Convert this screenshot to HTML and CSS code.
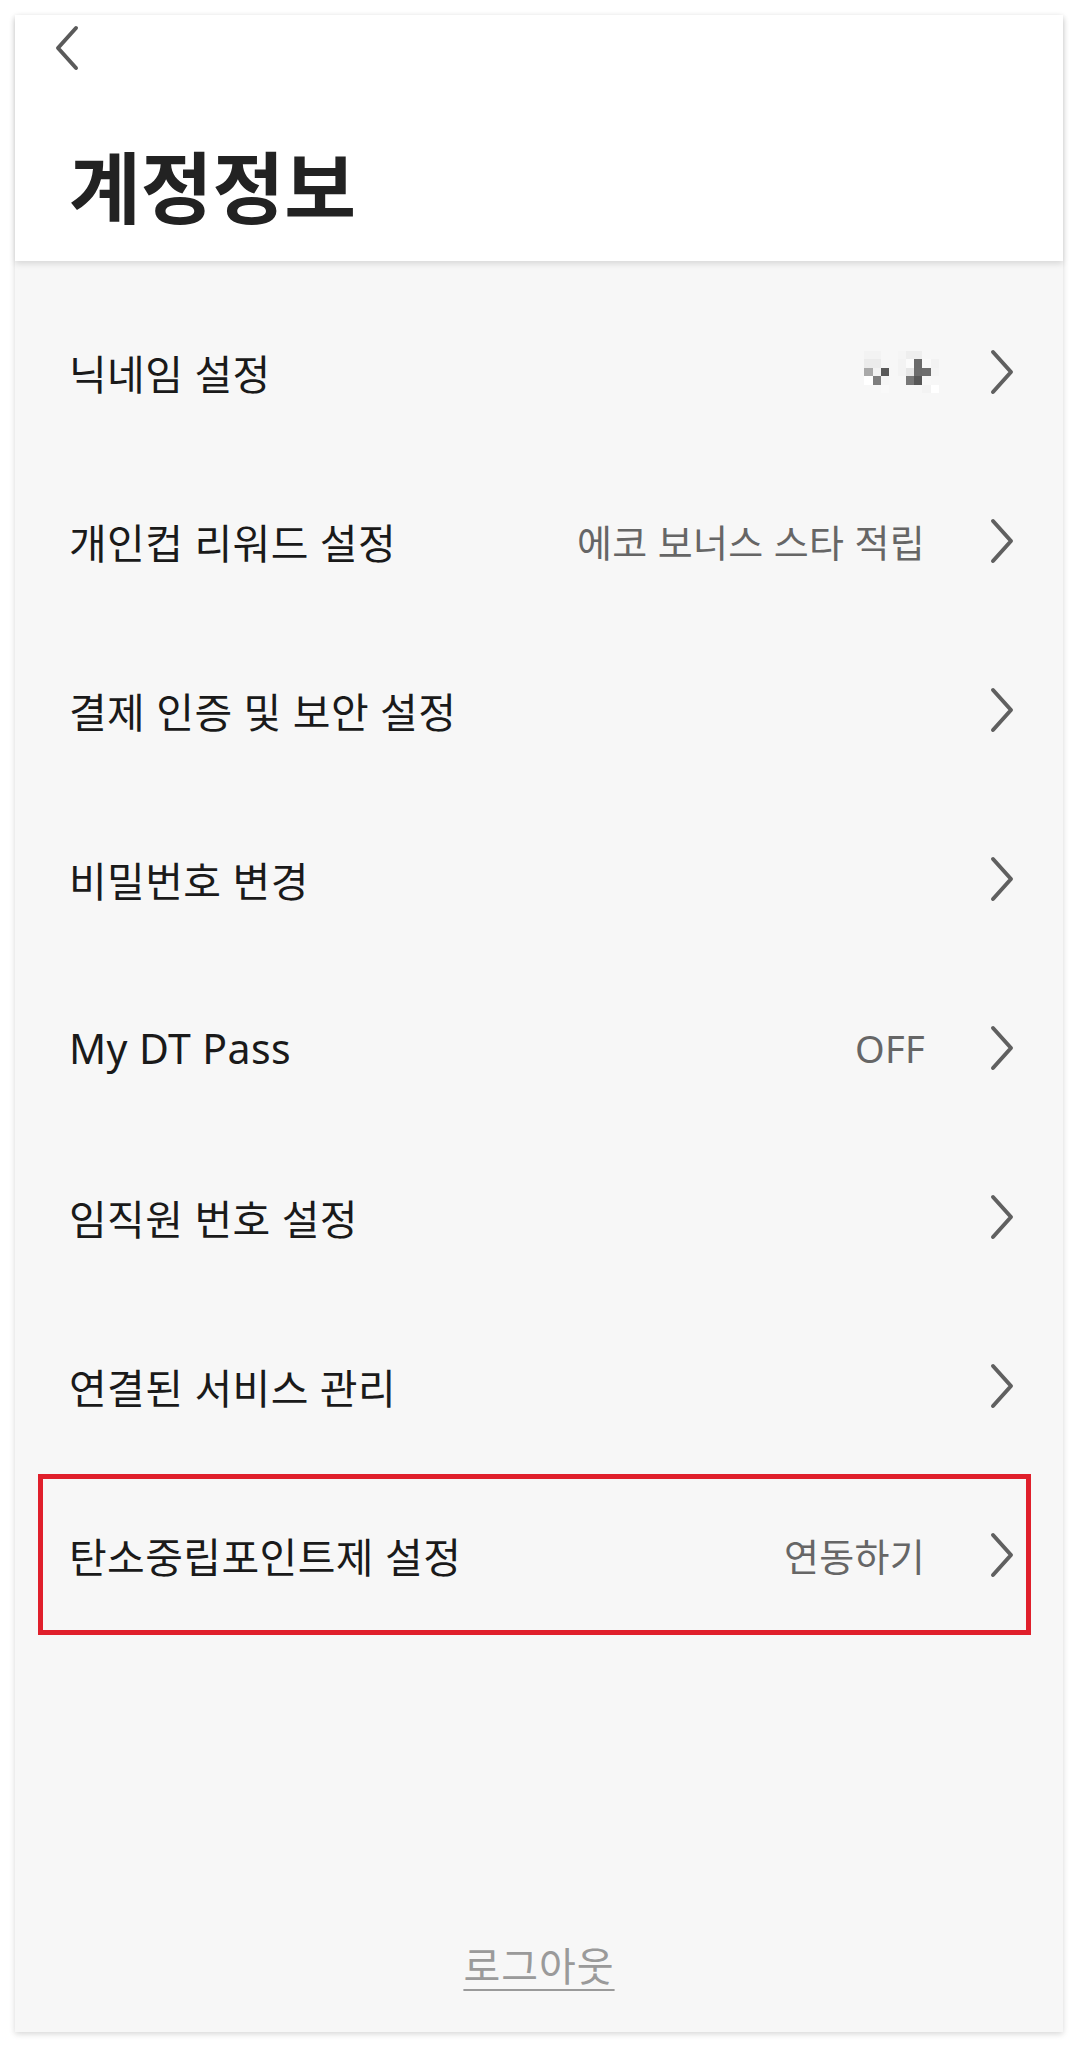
FILE: index.html
```html
<!DOCTYPE html>
<html lang="ko">

<head>
    <meta charset="UTF-8">
    <meta name="viewport" content="width=device-width, initial-scale=1.0">
    <title>계정정보</title>
    <link rel="stylesheet" href="styles.css">
</head>

<body>
    <div class="screen">
        <div class="header">
            <button class="back" aria-label="뒤로">
                <svg width="24" height="46" viewBox="0 0 24 46">
                    <polyline points="21,3 3,23 21,43" fill="none" stroke="#5a5a5a" stroke-width="4"
                        stroke-linecap="round" stroke-linejoin="round" />
                </svg>
            </button>
            <h1 class="title">계정정보</h1>
        </div>

        <div class="content">
            <ul class="menu">
                <li class="menu-item">
                    <span class="label">닉네임 설정</span>
                    <span class="value nick">
                        <svg width="83" height="42" viewBox="0 0 10 5" preserveAspectRatio="none" shape-rendering="crispEdges">
                            <rect x="1" y="0" width="2" height="1" fill="#f3f3f3" />
                            <rect x="5" y="0" width="1" height="1" fill="#f5f5f5" />
                            <rect x="6" y="0" width="2" height="1" fill="#eeeeee" />
                            <rect x="1" y="1" width="2" height="1" fill="#ebebeb" />
                            <rect x="5" y="1" width="1" height="1" fill="#f3f3f3" />
                            <rect x="6" y="1" width="1" height="1" fill="#fbfbfb" />
                            <rect x="7" y="1" width="1" height="1" fill="#6b6b6b" />
                            <rect x="8" y="1" width="1" height="1" fill="#fafafa" />
                            <rect x="9" y="1" width="1" height="1" fill="#f2f2f2" />
                            <rect x="1" y="2" width="1" height="1" fill="#a9a9a9" />
                            <rect x="2" y="2" width="1" height="1" fill="#f2f2f2" />
                            <rect x="3" y="2" width="1" height="1" fill="#595959" />
                            <rect x="5" y="2" width="1" height="1" fill="#f3f3f3" />
                            <rect x="6" y="2" width="1" height="1" fill="#e6e6e6" />
                            <rect x="7" y="2" width="1" height="1" fill="#6c6c6c" />
                            <rect x="8" y="2" width="1" height="1" fill="#6e6e6e" />
                            <rect x="9" y="2" width="1" height="1" fill="#f4f4f4" />
                            <rect x="1" y="3" width="1" height="1" fill="#ffffff" />
                            <rect x="2" y="3" width="1" height="1" fill="#7e7e7e" />
                            <rect x="3" y="3" width="1" height="1" fill="#f6f6f6" />
                            <rect x="6" y="3" width="1" height="1" fill="#777777" />
                            <rect x="7" y="3" width="1" height="1" fill="#575757" />
                            <rect x="8" y="3" width="1" height="1" fill="#f8f8f8" />
                            <rect x="3" y="4" width="1" height="1" fill="#f9f9f9" />
                            <rect x="8" y="4" width="1" height="1" fill="#f3f3f3" />
                            <rect x="9" y="4" width="1" height="1" fill="#ffffff" />
                        </svg>
                    </span>
                    <svg class="chevron" width="24" height="46" viewBox="0 0 24 46">
                        <polyline points="3,3 21,23 3,43" />
                    </svg>
                </li>
                <li class="menu-item">
                    <span class="label">개인컵 리워드 설정</span>
                    <span class="value">에코 보너스 스타 적립</span>
                    <svg class="chevron" width="24" height="46" viewBox="0 0 24 46">
                        <polyline points="3,3 21,23 3,43" />
                    </svg>
                </li>
                <li class="menu-item">
                    <span class="label">결제 인증 및 보안 설정</span>
                    <svg class="chevron" width="24" height="46" viewBox="0 0 24 46">
                        <polyline points="3,3 21,23 3,43" />
                    </svg>
                </li>
                <li class="menu-item">
                    <span class="label">비밀번호 변경</span>
                    <svg class="chevron" width="24" height="46" viewBox="0 0 24 46">
                        <polyline points="3,3 21,23 3,43" />
                    </svg>
                </li>
                <li class="menu-item">
                    <span class="label">My DT Pass</span>
                    <span class="value">OFF</span>
                    <svg class="chevron" width="24" height="46" viewBox="0 0 24 46">
                        <polyline points="3,3 21,23 3,43" />
                    </svg>
                </li>
                <li class="menu-item">
                    <span class="label">임직원 번호 설정</span>
                    <svg class="chevron" width="24" height="46" viewBox="0 0 24 46">
                        <polyline points="3,3 21,23 3,43" />
                    </svg>
                </li>
                <li class="menu-item">
                    <span class="label">연결된 서비스 관리</span>
                    <svg class="chevron" width="24" height="46" viewBox="0 0 24 46">
                        <polyline points="3,3 21,23 3,43" />
                    </svg>
                </li>
                <li class="menu-item highlight">
                    <span class="label">탄소중립포인트제 설정</span>
                    <span class="value">연동하기</span>
                    <svg class="chevron" width="24" height="46" viewBox="0 0 24 46">
                        <polyline points="3,3 21,23 3,43" />
                    </svg>
                </li>
            </ul>

            <div class="logout">
                <a href="#" class="logout-link">로그아웃</a>
            </div>
        </div>
    </div>
</body>

</html>
```

FILE: styles.css
```css
* {
    padding: 0;
    margin: 0;
    box-sizing: border-box;
}

body {
    background: #ffffff;
    font-family: "Noto Sans", "Noto Sans CJK KR", sans-serif;
    color: #1a1a1a;
}

.screen {
    width: 1048px;
    height: 2017px;
    margin: 15px;
    display: flex;
    flex-direction: column;
    background: #f7f7f7;
    box-shadow: rgba(0, 0, 0, 0.16) 0px 2px 6px;
}

/* header */
.header {
    position: relative;
    z-index: 1;
    height: 246px;
    padding: 10px 0 0 40px;
    background: #ffffff;
    box-shadow: rgba(0, 0, 0, 0.12) 0px 3px 6px;
}

.back {
    display: block;
    width: 24px;
    height: 46px;
    border: none;
    background: none;
    cursor: pointer;
}

.back svg {
    display: block;
}

.title {
    margin: 68px 0 0 14px;
    font-family: "Noto Sans CJK KR", sans-serif;
    font-size: 78px;
    line-height: 90px;
    font-weight: 700;
    letter-spacing: 0;
    color: #222222;
}

/* list */
.content {
    flex: 1;
    display: flex;
    flex-direction: column;
}

.menu {
    list-style: none;
    padding-top: 26px;
}

.menu-item {
    position: relative;
    height: 169px;
    padding: 0 49px 0 54px;
    display: flex;
    align-items: center;
}

.label {
    flex: 1;
    font-size: 41px;
    letter-spacing: 0.4px;
    color: #1a1a1a;
}

.value {
    font-size: 38px;
    letter-spacing: 0.3px;
    color: #666666;
}

.value.nick {
    display: flex;
    margin-right: -7px;
}

.chevron {
    margin-left: 65px;
    fill: none;
    stroke: #606060;
    stroke-width: 4;
    stroke-linecap: round;
    stroke-linejoin: round;
}

.value.nick + .chevron {
    margin-left: 58px;
}

.highlight::after {
    content: "";
    position: absolute;
    top: 4px;
    bottom: 4px;
    left: 23px;
    right: 32px;
    border: 5px solid #e01f2b;
}

/* logout */
.logout {
    margin-top: auto;
    padding-bottom: 41px;
    text-align: center;
}

.logout-link {
    font-size: 40px;
    line-height: 50px;
    letter-spacing: 1px;
    color: #9a9a9a;
    text-decoration: underline;
    text-decoration-thickness: 2px;
    text-underline-offset: 8px;
}
```
